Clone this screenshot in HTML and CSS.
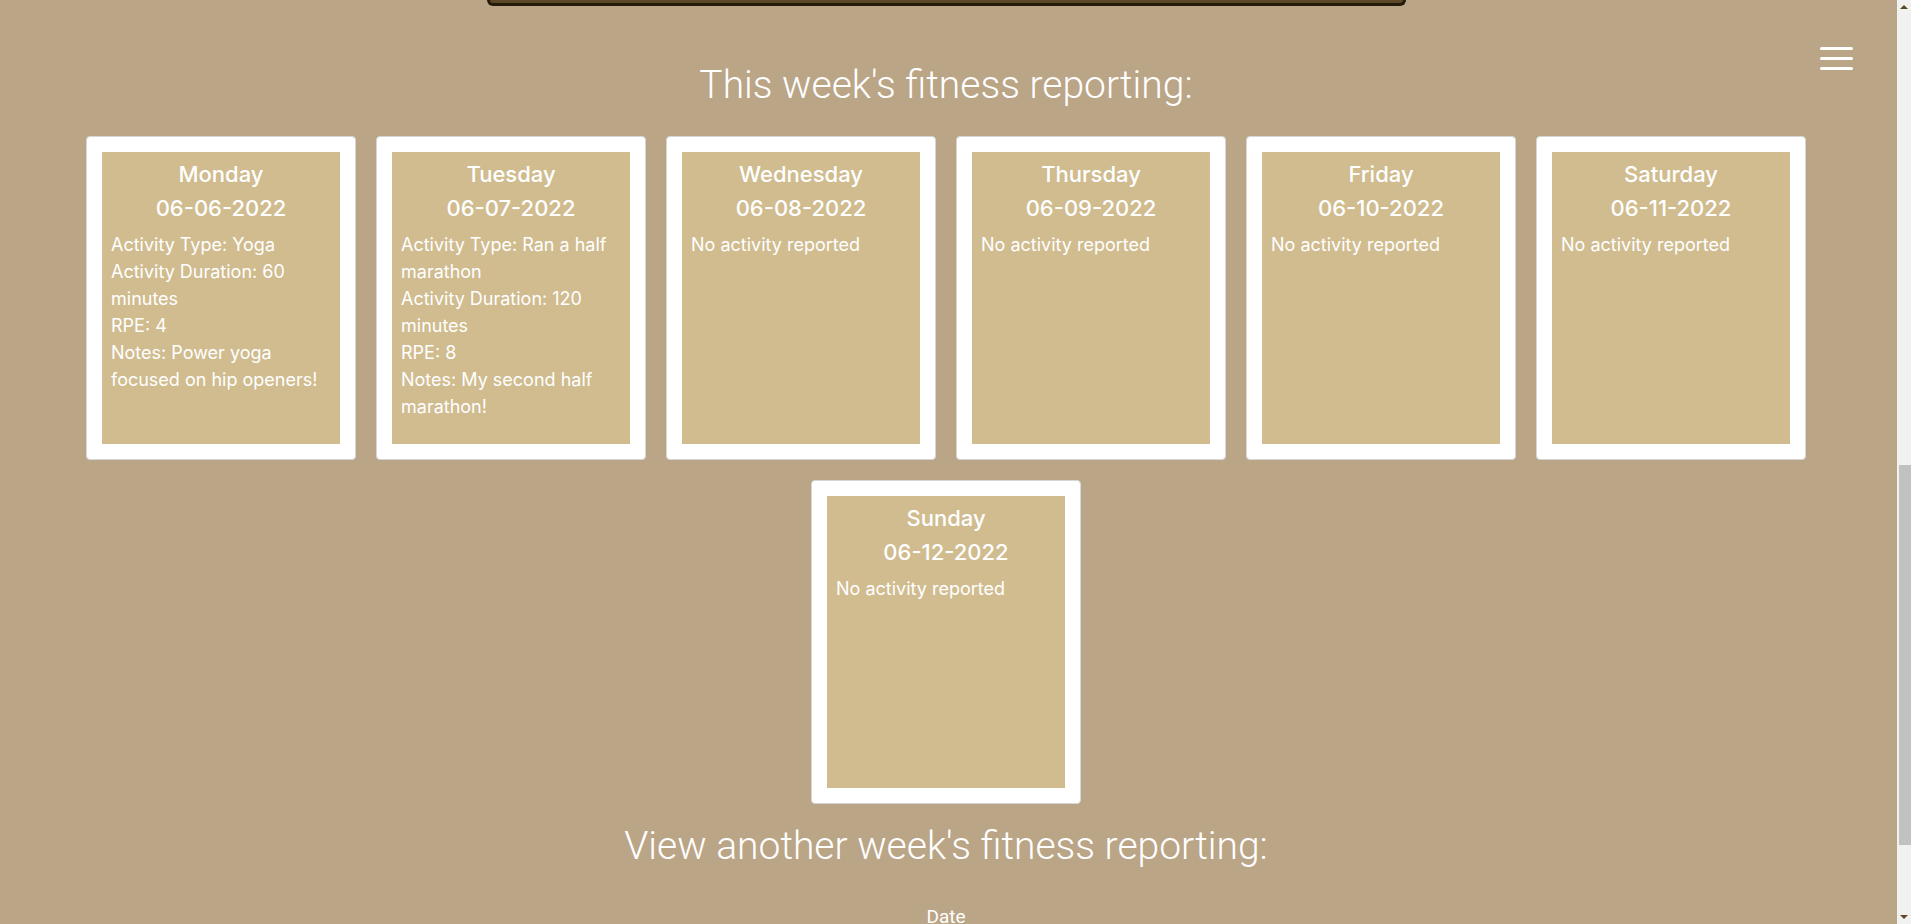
FILE: index.html
```html
<!DOCTYPE html>
<html lang="en">
<head>
    <meta charset="UTF-8">
    <meta name="viewport" content="width=device-width, initial-scale=1.0">
    <title>Fitness Reporting</title>
    <link rel="stylesheet" href="styles.css">
</head>
<body>
    <div class="top-panel"></div>

    <button class="menu-toggle" aria-label="Menu">
        <span></span>
        <span></span>
        <span></span>
    </button>

    <div class="page-scrollbar">
        <div class="arrow up"></div>
        <div class="thumb"></div>
        <div class="arrow down"></div>
    </div>

    <h2 class="section-title">This week's fitness reporting:</h2>

    <div class="week-container">
        <div class="day-card">
            <div class="day-inner">
                <div class="day-name">Monday</div>
                <div class="day-date">06-06-2022</div>
                <div class="day-info">
                    Activity Type: Yoga<br>
                    Activity Duration: 60 minutes<br>
                    RPE: 4<br>
                    Notes: Power yoga focused on hip openers!
                </div>
            </div>
        </div>
        <div class="day-card">
            <div class="day-inner">
                <div class="day-name">Tuesday</div>
                <div class="day-date">06-07-2022</div>
                <div class="day-info">
                    Activity Type: Ran a half marathon<br>
                    Activity Duration: 120 minutes<br>
                    RPE: 8<br>
                    Notes: My second half marathon!
                </div>
            </div>
        </div>
        <div class="day-card">
            <div class="day-inner">
                <div class="day-name">Wednesday</div>
                <div class="day-date">06-08-2022</div>
                <div class="day-info">No activity reported</div>
            </div>
        </div>
        <div class="day-card">
            <div class="day-inner">
                <div class="day-name">Thursday</div>
                <div class="day-date">06-09-2022</div>
                <div class="day-info">No activity reported</div>
            </div>
        </div>
        <div class="day-card">
            <div class="day-inner">
                <div class="day-name">Friday</div>
                <div class="day-date">06-10-2022</div>
                <div class="day-info">No activity reported</div>
            </div>
        </div>
        <div class="day-card">
            <div class="day-inner">
                <div class="day-name">Saturday</div>
                <div class="day-date">06-11-2022</div>
                <div class="day-info">No activity reported</div>
            </div>
        </div>
        <div class="day-card">
            <div class="day-inner">
                <div class="day-name">Sunday</div>
                <div class="day-date">06-12-2022</div>
                <div class="day-info">No activity reported</div>
            </div>
        </div>
    </div>

    <h2 class="section-title lower">View another week's fitness reporting:</h2>

    <form class="week-form">
        <label for="weekDate">Date</label>
        <input type="date" id="weekDate" name="weekDate">
        <button type="submit">Submit</button>
    </form>
</body>
</html>
```

FILE: styles.css
```css
body {
    font-family: Inter, "Noto Sans", sans-serif;
    background-color: #bba587;
    color: #fff;
    margin: 0;
    padding: 0 19px 200px 0;
}

.top-panel {
    width: 913px;
    height: 3px;
    margin: 0 auto;
    background-color: #5b4828;
    border: 3px solid #241a0a;
    border-top: none;
    border-radius: 0 0 6px 6px;
}

.menu-toggle {
    position: fixed;
    top: 42px;
    right: 53px;
    background: none;
    border: none;
    padding: 5px;
    cursor: pointer;
}

.menu-toggle span {
    display: block;
    width: 33px;
    height: 3px;
    margin-bottom: 7px;
    background-color: #fff;
    border-radius: 2px;
}

/* scrollbar as it shows in the page capture */
.page-scrollbar {
    position: fixed;
    top: 0;
    right: 0;
    bottom: 0;
    width: 14px;
    background-color: #f1f1f0;
}

.page-scrollbar .thumb {
    position: absolute;
    top: 465px;
    left: 2px;
    right: 0;
    height: 380px;
    background-color: #c1c1c0;
}

.page-scrollbar .arrow {
    position: absolute;
    left: 3px;
    width: 0;
    height: 0;
    border-left: 4px solid transparent;
    border-right: 4px solid transparent;
}

.page-scrollbar .arrow.up {
    top: 5px;
    border-bottom: 4px solid #5b4828;
}

.page-scrollbar .arrow.down {
    bottom: 5px;
    border-top: 4px solid #5b4828;
}

.section-title {
    font-family: Roboto, "Liberation Sans", sans-serif;
    font-weight: 300;
    font-size: 39px;
    line-height: 48px;
    text-align: center;
    margin: 55px 0 0;
}

.section-title.lower {
    margin-top: 18px;
}

.week-container {
    display: flex;
    flex-wrap: wrap;
    justify-content: center;
    gap: 20px;
    width: 1720px;
    margin: 27px auto 0;
}

.day-card {
    box-sizing: border-box;
    width: 270px;
    padding: 15px;
    background-color: #fff;
    border: 1px solid #d6d6d6;
    border-radius: 4px;
}

.day-inner {
    box-sizing: border-box;
    height: 292px;
    padding: 5px 9px;
    background-color: #d0bc8f;
}

.day-name,
.day-date {
    font-size: 22px;
    font-weight: 500;
    line-height: 34px;
    text-align: center;
}

.day-info {
    font-size: 18px;
    line-height: 27px;
    margin-top: 6px;
}

.week-form {
    display: flex;
    flex-direction: column;
    align-items: center;
    margin-top: 35px;
    font-family: Roboto, "Liberation Sans", sans-serif;
}

.week-form label {
    font-size: 19px;
    font-weight: 400;
    margin-bottom: 10px;
}

.week-form input {
    font-size: 16px;
    padding: 6px 10px;
    margin-bottom: 14px;
}

.week-form button {
    font-size: 16px;
    padding: 8px 20px;
}
```
